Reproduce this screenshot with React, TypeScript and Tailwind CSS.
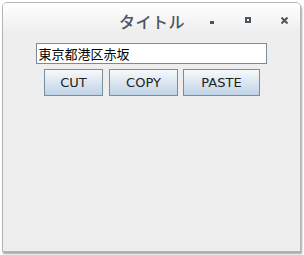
import React from 'react';

export default function App() {
  return (
    <div className="w-[304px] h-[255px] bg-white p-[2px] pb-[3px] pr-[3px]">
      <div className="w-full h-full flex flex-col rounded-t-[5px] border border-[#b5b5b5] bg-[#eeeeee] shadow-[1px_2px_2px_rgba(0,0,0,0.35)] overflow-hidden">
        {/* Title bar */}
        <div className="relative h-[33px] bg-gradient-to-b from-[#ffffff] to-[#ececec] flex items-center" style={{ fontFamily: '"Noto Sans CJK JP", "DejaVu Sans", sans-serif' }}>
          <div className="absolute left-[116px] top-[6px] text-[16px] text-[#4b5560] font-medium tracking-[0.5px]">タイトル</div>
          <div className="absolute left-[207px] top-[18px] w-[4px] h-[3px] bg-[#4b5560]"></div>
          <div className="absolute left-[242px] top-[14px] w-[6px] h-[6px] border-2 border-[#4b5560]"></div>
          <svg className="absolute left-[278px] top-[14px]" width="7" height="7" viewBox="0 0 7 7">
            <path d="M0.5 0.5 L6.5 6.5 M6.5 0.5 L0.5 6.5" stroke="#4b5560" strokeWidth="2" />
          </svg>
        </div>
        {/* Content */}
        <div className="flex-1 flex flex-col items-center pt-[7px]">
          <input
            readOnly
            value="東京都港区赤坂"
            className="w-[231px] h-[21px] border border-[#7a8a99] bg-white px-[2px] text-[13px] text-black outline-none ml-[-1px]"
            style={{ fontFamily: '"Noto Sans CJK JP", sans-serif' }}
          />
          <div className="flex mt-[5px] ml-[1px]" style={{ fontFamily: '"DejaVu Sans", sans-serif' }}>
            <button className="w-[59px] h-[27px] border border-[#7a8c9f] bg-gradient-to-b from-[#f7f9fb] to-[#c0d3e6] text-[13px] text-[#222222]">CUT</button>
            <button className="ml-[6px] w-[69px] h-[27px] border border-[#7a8c9f] bg-gradient-to-b from-[#f7f9fb] to-[#c0d3e6] text-[13px] text-[#222222]">COPY</button>
            <button className="ml-[5px] w-[77px] h-[27px] border border-[#7a8c9f] bg-gradient-to-b from-[#f7f9fb] to-[#c0d3e6] text-[13px] text-[#222222]">PASTE</button>
          </div>
        </div>
      </div>
    </div>
  );
}
